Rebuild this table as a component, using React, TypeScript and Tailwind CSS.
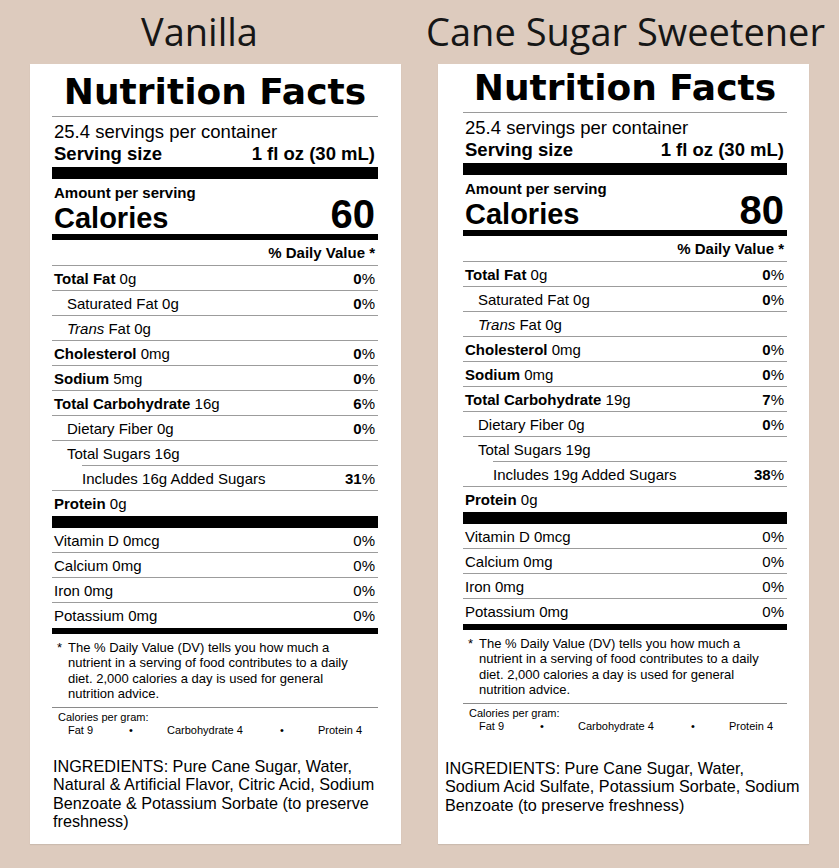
import type { ReactNode } from 'react'

interface LabelData {
  title: string
  titleClass: string
  padClass: string
  headClass: string
  calories: string
  sodium: string
  carb: string
  carbDv: string
  sugars: string
  addedDv: string
  ingredients: ReactNode
  ingClass: string
}

const Row = ({
  children,
  dv,
  indent = 0,
  border = true,
  boldDv = true,
  h = 'h-[25px]',
}: {
  children: ReactNode
  dv?: string
  indent?: 0 | 1 | 2
  border?: boolean
  boldDv?: boolean
  h?: string
}) => {
  const pad = indent === 2 ? 'pl-[30px]' : indent === 1 ? 'pl-[15px]' : 'pl-[2px]'
  return (
    <div
      className={`flex ${h} items-center justify-between pr-[3px] text-[15px] leading-[15px] ${pad} ${
        border ? 'border-b border-[#9c9c9c]' : ''
      }`}
    >
      <span>{children}</span>
      {dv !== undefined && (
        <span>
          {boldDv ? <b>{dv}</b> : dv}%
        </span>
      )}
    </div>
  )
}

const Label = ({ d }: { d: LabelData }) => (
  <div className="flex w-[371px] flex-col">
    <div
      className={`flex h-[64px] justify-center whitespace-nowrap pt-[12px] font-['Open_Sans',sans-serif] text-[38px] leading-[38px] text-[#161616] ${d.titleClass}`}
    >
      <span>{d.title}</span>
    </div>
    <div className="h-[780px] bg-white font-['Liberation_Sans',Arial,sans-serif] text-black shadow-[0_1px_1px_rgba(0,0,0,0.08)]">
      <div className={d.padClass}>
        {/* heading */}
        <div
          className={`border-b border-[#9a9a9a] text-center font-['DejaVu_Sans',sans-serif] text-[36px] font-bold leading-[36px] ${d.headClass}`}
        >
          Nutrition Facts
        </div>

        <div className="pb-[3px] pl-[2px] pr-[3px] pt-[4px] text-[18.5px] leading-[21.5px]">
          <div>25.4 servings per container</div>
          <div className="flex justify-between font-bold">
            <span>Serving size</span>
            <span>1 fl oz (30 mL)</span>
          </div>
        </div>
        <div className="h-[12px] bg-black" />

        <div className="h-[55px] pl-[2px] pr-[3px] pt-[6px]">
          <div className="text-[15px] font-bold leading-[15px]">Amount per serving</div>
          <div className="-mt-[6px] flex items-baseline justify-between font-bold">
            <span className="text-[29px] leading-[29px]">Calories</span>
            <span className="text-[40px] leading-[40px]">{d.calories}</span>
          </div>
        </div>
        <div className="h-[6px] bg-black" />

        <div className="flex h-[26px] items-center justify-end border-b border-[#9c9c9c] pr-[3px] text-[15px] font-bold leading-[15px]">
          % Daily Value *
        </div>

        <Row dv="0">
          <b>Total Fat</b> 0g
        </Row>
        <Row dv="0" indent={1}>
          Saturated Fat 0g
        </Row>
        <Row indent={1}>
          <i>Trans</i> Fat 0g
        </Row>
        <Row dv="0">
          <b>Cholesterol</b> 0mg
        </Row>
        <Row dv="0">
          <b>Sodium</b> {d.sodium}
        </Row>
        <Row dv={d.carbDv}>
          <b>Total Carbohydrate</b> {d.carb}
        </Row>
        <Row dv="0" indent={1}>
          Dietary Fiber 0g
        </Row>
        <Row indent={1} border={false} h="h-[24px]">
          Total Sugars {d.sugars}
        </Row>
        <div className="ml-[30px] h-px bg-[#9c9c9c]" />
        <Row dv={d.addedDv} indent={2}>
          Includes {d.sugars} Added Sugars
        </Row>
        <Row border={false}>
          <b>Protein</b> 0g
        </Row>
        <div className="h-[12px] bg-black" />

        <Row dv="0" boldDv={false}>
          Vitamin D 0mcg
        </Row>
        <Row dv="0" boldDv={false}>
          Calcium 0mg
        </Row>
        <Row dv="0" boldDv={false}>
          Iron 0mg
        </Row>
        <Row dv="0" boldDv={false} border={false}>
          Potassium 0mg
        </Row>
        <div className="h-[6px] bg-black" />

        {/* footnote */}
        <div className="flex border-b border-[#8a8a8a] pb-[6px] pl-[5px] pt-[6px] text-[13px] leading-[15.3px]">
          <span className="w-[11px] shrink-0">*</span>
          <div>
            The % Daily Value (DV) tells you how much a<br />
            nutrient in a serving of food contributes to a daily<br />
            diet. 2,000 calories a day is used for general<br />
            nutrition advice.
          </div>
        </div>

        <div className="pl-[6px] pt-[3px] text-[11px] leading-[13.3px]">
          <div>Calories per gram:</div>
          <div className="flex pl-[10px]">
            <span className="w-[61px]">Fat 9</span>
            <span className="w-[38px]">•</span>
            <span className="w-[113px]">Carbohydrate 4</span>
            <span className="w-[38px]">•</span>
            <span>Protein 4</span>
          </div>
        </div>
      </div>

      <div className={`text-[16.2px] leading-[18.4px] ${d.ingClass}`}>{d.ingredients}</div>
    </div>
  </div>
)

const vanilla: LabelData = {
  title: 'Vanilla',
  titleClass: 'pr-[32px]',
  padClass: 'pl-[22px] pr-[23px]',
  headClass: 'h-[53px] pt-[9.5px]',
  calories: '60',
  sodium: '5mg',
  carb: '16g',
  carbDv: '6',
  sugars: '16g',
  addedDv: '31',
  ingClass: 'mt-[19px] pl-[23px]',
  ingredients: (
    <>
      INGREDIENTS: Pure Cane Sugar, Water,
      <br />
      Natural &amp; Artificial Flavor, Citric Acid, Sodium
      <br />
      Benzoate &amp; Potassium Sorbate (to preserve
      <br />
      freshness)
    </>
  ),
}

const caneSugar: LabelData = {
  title: 'Cane Sugar Sweetener',
  titleClass: 'pl-[4px]',
  padClass: 'pl-[25px] pr-[22px]',
  headClass: 'h-[49px] pt-[5.5px]',
  calories: '80',
  sodium: '0mg',
  carb: '19g',
  carbDv: '7',
  sugars: '19g',
  addedDv: '38',
  ingClass: 'mt-[25px] pl-[7px]',
  ingredients: (
    <>
      INGREDIENTS: Pure Cane Sugar, Water,
      <br />
      Sodium Acid Sulfate, Potassium Sorbate, Sodium
      <br />
      Benzoate (to preserve freshness)
    </>
  ),
}

export default function App() {
  return (
    <div className="flex h-[868px] w-[839px] gap-[37px] overflow-hidden bg-[#ddcbbe] px-[30px]">
      <Label d={vanilla} />
      <Label d={caneSugar} />
    </div>
  )
}
